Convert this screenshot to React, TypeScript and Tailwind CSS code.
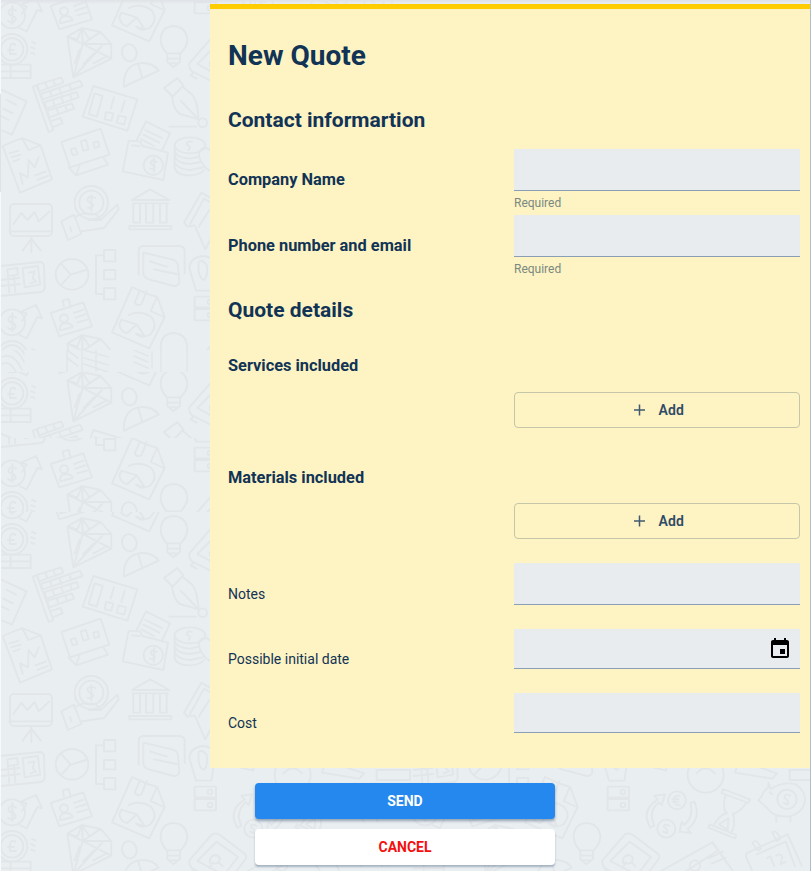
import type { ReactNode } from "react";

/* Line icons of the wallpaper tile, drawn on a 1239 x 921 grid (one third of a pixel per unit). */
function TileIcons() {
  return (
    <>
      {/* dollar coin with arrow */}
      <circle cx="36" cy="46" r="39" />
      <path d="M48 32Q34 20 26 34Q24 44 36 47Q50 52 46 62Q36 72 24 62M37 18V72M58 84L80 94L112 30L126 34L108 -6L64 14L80 20L66 42" />
      {/* id badge */}
      <path d="M152 18L250 -14L276 58L178 88ZM192 -2L188 -20L206 -24L212 0M222 18L250 8M226 32L256 22M232 46L262 38" />
      <circle cx="192" cy="34" r="12" />
      <path d="M180 70Q178 50 196 48Q214 48 218 60Z" />
      {/* report with pie chart */}
      <path d="M396 -60L336 76L448 124L494 30L472 -30L440 -40ZM470 -28L452 12L492 30M404 -14L420 -50M424 -8L440 -48M404 -14Q412 0 424 -8" />
      <path d="M386 24Q420 8 454 30Q476 60 448 84Q424 96 408 80L434 88L410 52L364 38L358 52Q362 76 382 78L410 52" />
      {/* pound coin and gift */}
      <circle cx="36" cy="148" r="46" />
      <circle cx="36" cy="148" r="34" />
      <path d="M46 134Q32 126 30 142V162H48M24 150H42M2 194H92V234H2M2 214H92M32 194V234M96 126L106 130M94 142L104 146M94 158L104 162" />
      {/* diamond */}
      <path d="M202 110L246 84L302 96L334 132L334 176L220 232ZM202 110L248 132L334 132M246 84L248 132L220 232M248 132L302 96M202 110L232 118L246 84L268 118L302 96M248 132L334 176M220 232L306 138M224 190L238 150M250 192L282 160M280 190L322 168" />
      {/* person */}
      <ellipse cx="388" cy="158" rx="22" ry="26" transform="rotate(-15 388 158)" />
      <path d="M372 260Q368 202 414 190Q456 184 476 212ZM414 190L426 232" />
      {/* light bulb */}
      <path d="M500 160Q482 140 482 118Q484 80 520 78Q558 80 562 118Q562 140 542 160ZM502 160V186L520 202L540 186V160M502 176H540M510 190H532" />
      {/* key card */}
      <path d="M568 190L636 112Q648 106 660 114L736 172Q742 180 734 190L682 258Q674 264 664 258L576 214Q566 204 568 190ZM592 192L650 134L714 180L672 234ZM582 216L572 226L590 236" />
      <path d="M630 198Q626 176 648 174Q666 180 656 196Q642 204 638 196L628 214M656 196L668 208" />
      {/* brick wall */}
      <path d="M98 260L110 256L160 390L146 396ZM112 254L184 232L190 248L118 274ZM122 282L240 242L248 258L128 298ZM134 306L230 276L236 292L140 326ZM142 332L216 310L222 326L148 352ZM156 362L182 354L188 370L162 380M136 248L142 266M160 240L166 258M150 274L156 290M178 264L184 282M208 254L214 270M158 300L164 318M184 292L190 308M210 284L216 300M170 326L176 342M196 318L202 334" />
      {/* slider card */}
      <path d="M280 258L412 298L382 392L248 350ZM284 280L308 288L290 350L266 342ZM342 292L332 326M374 302L364 336M318 336L340 340L334 362L314 358ZM356 346L378 352L372 374L350 368Z" />
      {/* fountain pen */}
      <path d="M492 264L532 234L550 256L518 290ZM516 290Q520 328 540 342L596 358Q592 302 578 286L550 262M542 302L596 358M508 380H588" />
      <circle cx="608" cy="368" r="13" />
      {/* list sheet */}
      <path d="M2 268L80 304L36 404L2 390M20 300L48 314M10 326L38 340M2 348L26 360" />
      {/* chart document */}
      <path d="M8 438L66 414L122 436L156 538L60 578ZM66 414L86 450L122 436M28 460L56 452M34 472L62 464M40 484L58 478M68 552L60 520L84 532L86 480L104 502L116 472M106 526L138 514M112 540L144 528" />
      {/* desktop chart */}
      <path d="M184 426L302 386L328 464L210 502ZM206 502L228 526L324 494L310 472M228 526L240 492M212 448L226 444L232 462L218 466ZM242 424L258 420L266 448L250 452ZM280 428L294 424L298 440L284 444Z" />
      {/* folder */}
      <path d="M386 422L420 424L428 438L504 458L490 540L368 514ZM410 420L438 364L510 400L486 452M436 390L486 414M430 404L478 428M424 418L462 438M396 436L418 438" />
      <circle cx="460" cy="496" r="29" />
      <path d="M470 486Q456 476 452 488Q456 498 464 498Q468 510 450 506M462 474V516" />
      {/* coin stack and heart */}
      <ellipse cx="570" cy="436" rx="46" ry="24" />
      <path d="M524 438V504Q530 526 570 526Q600 524 612 510M524 454Q530 474 570 476L598 470M524 470Q532 490 570 492L602 486M524 488Q534 508 570 510L608 502M576 426Q562 420 560 434Q576 440 566 450M600 478Q590 452 612 444Q630 444 636 460Q660 436 682 460Q684 500 646 520Q614 510 600 478" />
      {/* presentation */}
      <rect x="30" y="612" width="126" height="96" rx="12" />
      <path d="M28 694H156M40 672L64 638L82 660L104 636L116 664L148 634M94 710V756M94 716L68 752M94 716L122 752" />
      {/* hand with coin */}
      <circle cx="274" cy="608" r="50" />
      <circle cx="274" cy="608" r="36" />
      <path d="M286 594Q268 584 262 598Q264 608 276 610Q286 622 264 624M274 586V632M184 664L222 644L244 702L204 720ZM222 652L250 640L286 642L304 658L352 614L356 628L312 684L244 694M266 660H302M210 680L214 694" />
      {/* bank */}
      <path d="M396 600L450 568L508 600ZM398 610H504M400 612V668H420V612M438 612V668H460V612M480 612V668H500V612M388 678H514V688H388Z" />
      {/* bank notes */}
      <path d="M552 668L604 578L680 622L616 748L584 676L562 680ZM570 672L612 596L664 626M596 680L628 630" />
      {/* calculator */}
      <path d="M2 798L120 786Q130 786 132 798L134 862Q134 874 122 876L2 888M68 804L114 798L120 854L74 862ZM22 808L52 804L54 824L24 828ZM2 840L58 834M2 858L60 852M24 828L28 878M42 828L46 876M86 818L104 814L98 834L108 844L92 850" />
      {/* pie clock */}
      <ellipse cx="216" cy="823" rx="49" ry="46" />
      <path d="M184 792L212 824L184 854M212 824L258 810" />
      {/* org tree */}
      <path d="M312 766H288V882H312M312 750H346V784H312ZM312 810H346V838H312ZM312 864H346V898H312Z" />
      {/* tablet */}
      <path d="M416 824V752Q416 740 428 738H538Q554 740 554 752V820M430 758L516 778Q532 782 534 796L538 846Q536 858 522 858L446 838Q430 832 430 820ZM450 784L500 800M462 808L530 822" />
      {/* hand with card */}
      <path d="M588 872L568 804Q570 774 606 768Q636 768 646 794L634 872ZM596 786Q604 776 620 794Q626 824 612 840Q592 832 596 786M642 778H760V842L642 814M654 786V808M584 890H648V922H584Z" />
      <circle cx="630" cy="906" r="7" />
    </>
  );
}

/* Icons of the right part of the tile. */
function TileIconsRight() {
  return (
    <>
      <path d="M584 6H648V40H584Z" />
      <circle cx="630" cy="24" r="7" />
      {/* exchange */}
      <path d="M712 92Q682 40 734 8L724 -4L756 -8L746 24L738 16Q704 44 724 86ZM844 14Q866 64 824 96L834 108L800 104L806 74L814 84Q844 58 832 18Z" />
      <circle cx="792" cy="10" r="27" />
      <circle cx="760" cy="95" r="27" />
      <path d="M800 -4Q782 -6 784 10Q786 26 800 24M778 6H796M778 14H796M768 86Q754 78 752 90Q768 98 762 108L750 104" />
      {/* hourglass */}
      <path d="M930 -24L1012 8L1006 18L926 -12ZM886 92L966 124L970 114L890 82ZM938 -6Q926 38 942 48Q918 54 902 86M1000 18Q978 48 960 50Q970 80 954 110M918 82L946 64L944 98Z" />
      {/* piggy bank */}
      <path d="M1066 -42L1074 -24Q1110 -48 1148 -38Q1176 -20 1176 10Q1172 46 1130 58Q1080 62 1062 32L1036 10L1046 -2Q1052 -20 1066 -28ZM1090 58V74M1132 58V74" />
      <circle cx="1122" cy="7" r="29" />
      <path d="M1132 -4Q1114 -12 1114 2Q1130 12 1124 22L1112 18M1070 -14L1078 -8" />
      {/* long bill */}
      <path d="M744 222L898 136L960 222M898 136L916 160L820 222M886 184L930 164M896 200L938 182" />
      <circle cx="846" cy="206" r="16" />
      {/* calendar */}
      <path d="M1006 166L1124 112L1166 206M1006 166Q996 170 1000 182L1018 222M1032 172L1118 134L1146 208M1018 138Q1026 124 1040 144Q1050 158 1034 160ZM1078 106Q1088 98 1098 116Q1104 132 1090 132ZM1062 184L1072 178L1084 208M1090 176Q1104 166 1108 182L1102 202L1118 194" />
      {/* gauge and lamp shade */}
      <circle cx="878" cy="854" r="54" />
      <path d="M850 850Q878 820 906 850M978 812L1092 850L1078 866L966 848ZM1130 840H1230V870H1130Z" />
    </>
  );
}

type BandProps = { id: string; top: number; bottom: number; children: ReactNode };
function Band({ id, top, bottom, children }: BandProps) {
  return (
    <>
      <clipPath id={id}>
        <rect x="0" y={top} width="811" height={bottom - top} />
      </clipPath>
      <g clipPath={`url(#${id})`}>{children}</g>
    </>
  );
}

function Tile({ x = 0, y }: { x?: number; y: number }) {
  return (
    <g transform={`translate(${x} ${y}) scale(0.33333)`}>
      <TileIcons />
      <TileIconsRight />
    </g>
  );
}

function Wallpaper() {
  return (
    <svg
      className="absolute inset-0 -z-10 h-[871px] w-[811px]"
      viewBox="0 0 811 871"
      fill="none"
      stroke="#e2e6e9"
      strokeWidth="5.6"
      strokeLinejoin="round"
      strokeLinecap="round"
    >
      <Band id="band-a" top={0} bottom={350}>
        <Tile y={0} />
        <Tile y={307} />
      </Band>
      <Band id="band-b" top={350} bottom={372}>
        <g strokeWidth="1.6">
          <path d="M161 350V372M187 350V372M67 345V372M82 337V372M96 350V372M67 350L78 358M67 358L78 366M84 350L108 357M84 358L108 365M84 364L108 372M134 350L148 356M134 356L148 362M134 362L148 368M152 352V368M125 372L150 382L154 372" />
          <path d="M2 344Q18 338 24 354M2 350Q16 344 24 362M2 357Q14 352 22 370M2 364Q10 360 16 372" />
        </g>
      </Band>
      <Band id="band-c" top={372} bottom={438}>
        <Tile y={344} />
      </Band>
      <Band id="band-d" top={438} bottom={512}>
        <Tile y={151} />
        <Tile y={458} />
      </Band>
      <Band id="band-e" top={512} bottom={871}>
        <Tile y={490} />
        <Tile y={797} />
        <Tile x={413} y={490} />
        <Tile x={413} y={797} />
      </Band>
    </svg>
  );
}

function Row({ label, className, children }: { label?: ReactNode; className: string; children: ReactNode }) {
  return (
    <div className={`flex ${className}`}>
      <div className="w-[286px] shrink-0">{label}</div>
      <div className="w-[286px] shrink-0">{children}</div>
    </div>
  );
}

function AddButton() {
  return (
    <button className="flex h-9 w-full items-center rounded border border-[#c5c5aa] pl-[117px] text-sm font-semibold tracking-[0.1px] text-[#2f4a67]">
      <svg className="mr-[12.5px] h-[14px] w-[14px]" viewBox="0 0 14 14" fill="none" stroke="#425a70" strokeWidth="1.5">
        <path d="M7.5 1.5V12.5M2 7H13" />
      </svg>
      Add
    </button>
  );
}

const field = "block w-full border-b border-[#8a9eb5] bg-[#e8ecef] outline-none";

export default function App() {
  return (
    <div className="relative isolate h-[871px] w-[811px] overflow-hidden border-r border-[#b3bdca] bg-[#e9eef1] font-['Roboto',sans-serif] text-[#113355]">
      <Wallpaper />
      <div className="absolute inset-x-0 top-0 h-1 bg-gradient-to-b from-[#dfe2e6] to-transparent" />
      <div className="absolute top-0 left-0 h-full w-px bg-[#f8f9fa]" />
      <div className="absolute top-[94px] left-0 h-[98px] w-px bg-[#dfe3e7]" />

      <main className="mt-1 ml-[210px] h-[764px] w-[600px] border-t-[5px] border-[#ffcc00] bg-[#fef3c3] pl-[18px]">
        <h1 className="pt-[27px] text-[28px] leading-10 font-bold">New Quote</h1>
        <h2 className="pt-[28px] text-[21px] leading-8 font-bold">Contact informartion</h2>
        <Row className="mt-[13px] h-[66px]" label={<label className="block pt-[19px] text-[16.38px] leading-6 font-bold">Company Name</label>}>
          <input className={`${field} h-[42px]`} />
          <p className="pt-[2px] text-xs leading-5 text-[#7a8980]">Required</p>
        </Row>
        <Row className="h-[66px]" label={<label className="block pt-[19px] text-[16.38px] leading-6 font-bold">Phone number and email</label>}>
          <input className={`${field} h-[42px]`} />
          <p className="pt-[2px] text-xs leading-5 text-[#7a8980]">Required</p>
        </Row>
        <h2 className="pt-[13px] text-[21px] leading-8 font-bold">Quote details</h2>
        <h3 className="pt-[28px] text-[16.38px] leading-6 font-bold">Services included</h3>
        <Row className="mt-[14px]"><AddButton /></Row>
        <h3 className="pt-[38px] text-[16.38px] leading-6 font-bold">Materials included</h3>
        <Row className="mt-[13px]"><AddButton /></Row>
        <Row className="mt-6 h-[66px]" label={<label className="block pt-[21px] text-sm leading-5">Notes</label>}>
          <input className={`${field} h-[42px]`} />
        </Row>
        <Row className="h-[64px]" label={<label className="block pt-5 text-sm leading-5">Possible initial date</label>}>
          <div className={`${field} flex! h-10 items-center justify-end pr-2`}>
            <svg className="h-6 w-6" viewBox="0 0 24 24" fill="#000">
              <path d="M17 12h-5v5h5v-5zM16 1v2H8V1H6v2H5c-1.11 0-1.99.9-1.99 2L3 19c0 1.1.89 2 2 2h14c1.1 0 2-.9 2-2V5c0-1.1-.9-2-2-2h-1V1h-2zm3 18H5V8h14v11z" />
            </svg>
          </div>
        </Row>
        <Row className="h-10" label={<label className="block pt-5 text-sm leading-5">Cost</label>}>
          <input className={`${field} h-10`} />
        </Row>
      </main>

      <div className="mt-[15px] ml-[255px] flex w-[300px] flex-col gap-2.5 text-sm font-bold">
        <button className="h-9 rounded bg-[#2488ee] text-white shadow-[0_2px_3px_rgba(17,51,85,0.4)]">SEND</button>
        <button className="h-9 rounded bg-white text-[#f50f0f] shadow-[0_2px_2px_rgba(17,51,85,0.3)]">CANCEL</button>
      </div>
    </div>
  );
}
